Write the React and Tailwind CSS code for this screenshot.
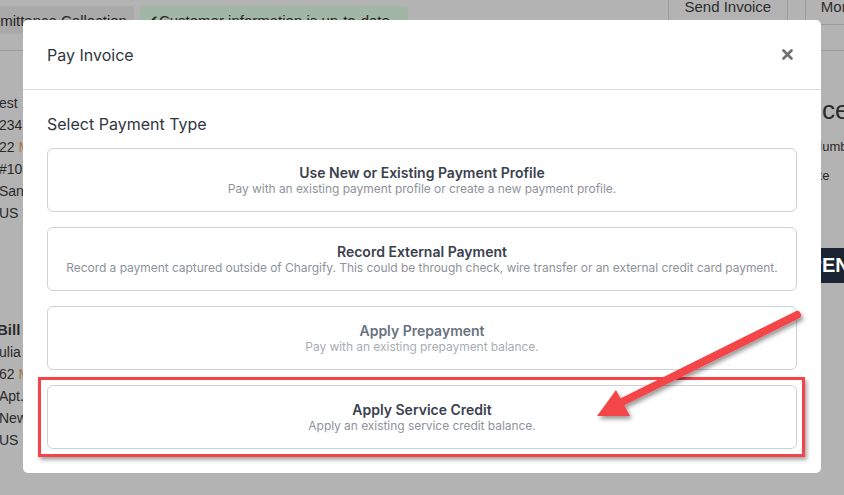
import React from "react";

const cards = [
  { title: "Use New or Existing Payment Profile", sub: "Pay with an existing payment profile or create a new payment profile." },
  { title: "Record External Payment", sub: "Record a payment captured outside of Chargify. This could be through check, wire transfer or an external credit card payment." },
  { title: "Apply Prepayment", sub: "Pay with an existing prepayment balance.", disabled: true },
  { title: "Apply Service Credit", sub: "Apply an existing service credit balance.", highlight: true },
];

function Card({ c }) {
  return (
    <div className="relative">
      <div className="h-[64px] rounded-[6px] border border-[#cfd1d5] bg-white flex flex-col items-center justify-center text-center">
        <div className={`text-[14px] leading-[16px] font-semibold ${c.disabled ? "text-[#6b7280]" : "text-[#3a414d]"}`}>{c.title}</div>
        <div className={`text-[12px] leading-[15px] tracking-[-0.05px] ${c.disabled ? "text-[#a8adb3]" : "text-[#8e939a]"}`}>{c.sub}</div>
      </div>
      {c.highlight && (
        <div className="absolute -left-[9px] -right-[8px] -top-[8px] -bottom-[8px] border-[3px] border-[#f4444a] shadow-[2px_3px_4px_rgba(0,0,0,0.35)] pointer-events-none" />
      )}
    </div>
  );
}

export default function App() {
  return (
    <div className="relative w-[844px] h-[495px] overflow-hidden bg-[#b3b3b3] font-['Liberation_Sans',Arial,sans-serif] text-[#262626]">
      {/* background page (dimmed) */}
      <div className="flex flex-col">
        <div className="h-[51px] border-b border-[#9b9b9b] flex items-start justify-between">
          <div className="flex gap-[6px] pt-[6px] -ml-[26px]">
            <div className="h-[28px] px-[7px] rounded-[3px] bg-[#a9a9a9] text-[15px] leading-[28px] pt-[1px] whitespace-nowrap">Remittance Collection</div>
            <div className="h-[28px] pl-[6px] pr-[18px] rounded-[3px] bg-[#a1b6a5] text-[15px] leading-[28px] pt-[1px] whitespace-nowrap">✔Customer information is up-to-date</div>
          </div>
          <div className="flex -mt-[11px] gap-[17px] -mr-[28px]">
            <div className="h-[36px] w-[120px] border border-[#9b9b9b] flex items-center justify-center text-[15px] font-medium text-[#2d2d2d]">Send Invoice</div>
            <div className="h-[36px] border border-[#9b9b9b] pl-[15px] pr-[16px] flex items-center text-[15px] font-medium text-[#2d2d2d]">More</div>
          </div>
        </div>
        <div className="flex justify-between">
          <div className="-ml-[1px] pt-[41px] text-[14px] leading-[22px] text-[#2a2a2a] whitespace-nowrap">
            <div>est</div>
            <div>234</div>
            <div>22 <span className="text-[#a8774a]">M</span></div>
            <div>#105</div>
            <div>San</div>
            <div>US</div>
            <div className="mt-[95px] font-bold text-[15px] -ml-[2px]">Bill To</div>
            <div>ulia</div>
            <div>62 <span className="text-[#a8774a]">M</span></div>
            <div>Apt.</div>
            <div>New</div>
            <div>US</div>
          </div>
          <div className="w-[74px] pt-[43px] text-[#2a2a2a] flex flex-col items-start whitespace-nowrap">
            <div className="text-[26px] leading-[32px] -ml-[3px]">Invoice</div>
            <div className="mt-[12px] text-[13px] leading-[18px] -ml-[2px]">Invoice Number</div>
            <div className="mt-[11px] text-[13px] leading-[18px] ml-[32px]">Date</div>
            <div className="mt-[63px] h-[35px] w-[84px] bg-[#1b2433] text-white font-bold text-[20px] leading-[35px] pl-[23px]">OPEN</div>
          </div>
        </div>
      </div>

      {/* modal */}
      <div className="absolute inset-0 flex justify-center pt-[20px]">
        <div className="w-[798px] h-[453px] bg-white rounded-[5px] font-['Inter',sans-serif] flex flex-col">
          <div className="h-[70px] border-b border-[#dedede] flex items-center justify-between pl-[24px] pr-[28px]">
            <div className="text-[16px] text-[#2f3640]">Pay Invoice</div>
            <svg width="11" height="11" viewBox="0 0 11 11">
              <path d="M1.5 1.5 L9.5 9.5 M9.5 1.5 L1.5 9.5" stroke="#707070" strokeWidth="2.6" strokeLinecap="round" />
            </svg>
          </div>
          <div className="px-[24px] pt-[24px]">
            <div className="text-[16px] leading-[20px] text-[#2f3640]">Select Payment Type</div>
            <div className="mt-[14px] flex flex-col gap-[15px]">
              {cards.map((c) => (
                <Card key={c.title} c={c} />
              ))}
            </div>
          </div>
        </div>
      </div>

      {/* arrow annotation */}
      <svg className="absolute inset-0 pointer-events-none" width="844" height="495" viewBox="0 0 844 495">
        <defs>
          <filter id="sh" x="-20%" y="-20%" width="140%" height="140%">
            <feDropShadow dx="2" dy="3" stdDeviation="2.2" floodColor="#000" floodOpacity="0.4" />
          </filter>
        </defs>
        <g filter="url(#sh)">
          <line x1="797" y1="315" x2="618" y2="404" stroke="#f4444a" strokeWidth="8" strokeLinecap="round" />
          <polygon points="597,416 616,390 630,416" fill="#f4444a" />
        </g>
      </svg>
    </div>
  );
}
